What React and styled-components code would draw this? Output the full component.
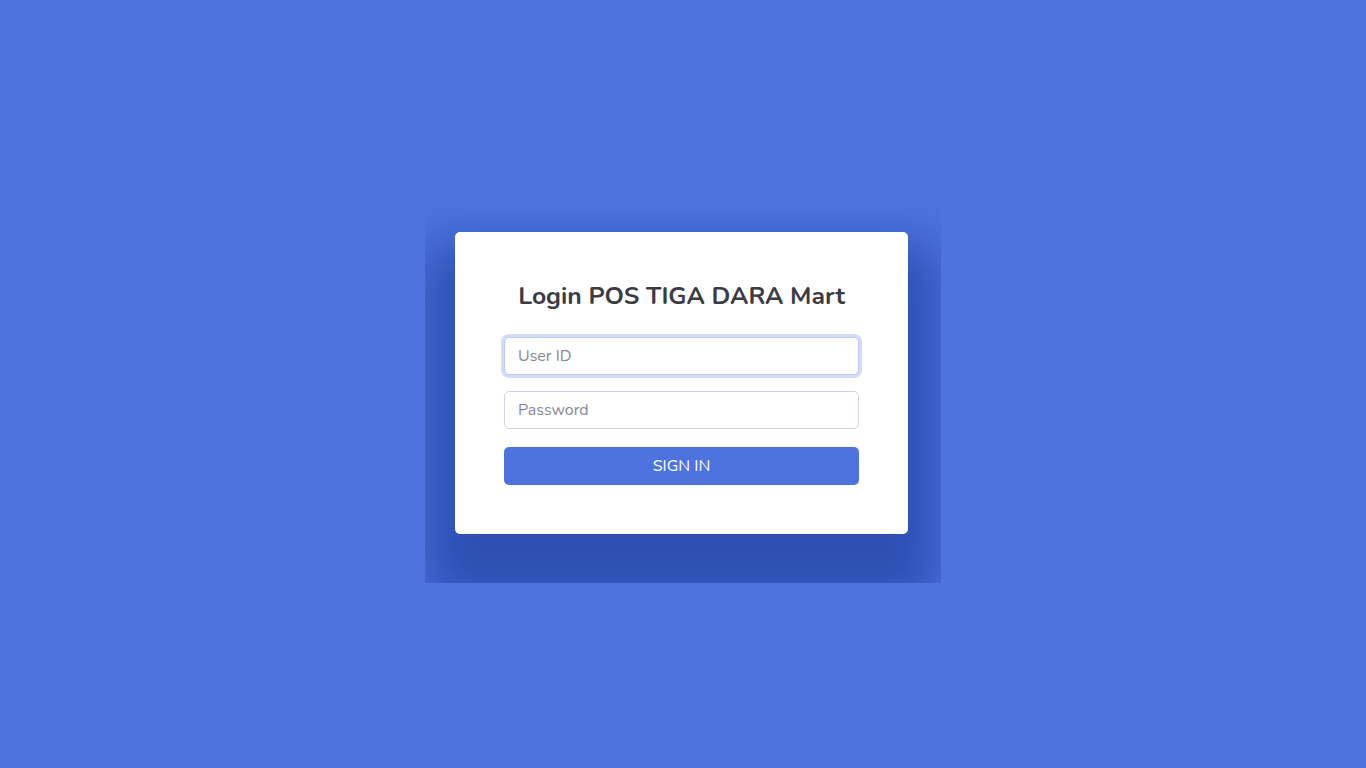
import React from 'react';
import styled, { createGlobalStyle } from 'styled-components';

const GlobalStyle = createGlobalStyle`
  html, body {
    margin: 0;
    height: 100%;
  }
  body {
    background: #4e73df;
    font-family: "Nunito", "Lato", "Liberation Sans", sans-serif;
  }
  #root {
    height: 100%;
  }
`;

const Page = styled.div`
  height: 100%;
  display: flex;
  align-items: center;
  justify-content: center;
`;

const ShadowFrame = styled.div`
  width: 516px;
  height: 398px;
  box-sizing: border-box;
  padding: 47px 33px 0 30px;
  overflow: hidden;
`;

const Card = styled.div`
  background: #fff;
  border-radius: 5px;
  padding: 50px 49px 49px;
  box-shadow: 0 42px 50px 30px rgba(0, 30, 120, 0.42);
`;

const Title = styled.h1`
  margin: 0 0 26px;
  text-align: center;
  font-size: 24.7px;
  line-height: 29px;
  font-weight: 700;
  color: #3a3b45;
`;

const Form = styled.form`
  display: flex;
  flex-direction: column;
`;

const Input = styled.input`
  box-sizing: border-box;
  width: 100%;
  height: 38px;
  margin-bottom: ${p => p.$gap}px;
  padding: 6px 13px;
  font: inherit;
  font-size: 16px;
  color: #6e707e;
  background: #fff;
  border: 1px solid ${p => (p.$focus ? '#bac8f3' : '#d1d3e2')};
  border-radius: 5px;
  outline: none;
  box-shadow: ${p => (p.$focus ? '0 0 0 3px rgba(78, 115, 223, 0.25)' : 'none')};

  &::placeholder {
    color: #858796;
  }
`;

const Button = styled.button`
  height: 38px;
  border: none;
  border-radius: 5px;
  background: #4e73df;
  color: #fff;
  font: inherit;
  font-size: 16px;
  text-transform: uppercase;
  cursor: pointer;
`;

export default function App() {
  return (
    <>
      <GlobalStyle />
      <Page>
        <ShadowFrame>
          <Card>
            <Title>Login POS TIGA DARA Mart</Title>
            <Form onSubmit={e => e.preventDefault()}>
              <Input $focus $gap={16} placeholder="User ID" />
              <Input $gap={18} type="password" placeholder="Password" />
              <Button type="submit">Sign In</Button>
            </Form>
          </Card>
        </ShadowFrame>
      </Page>
    </>
  );
}
